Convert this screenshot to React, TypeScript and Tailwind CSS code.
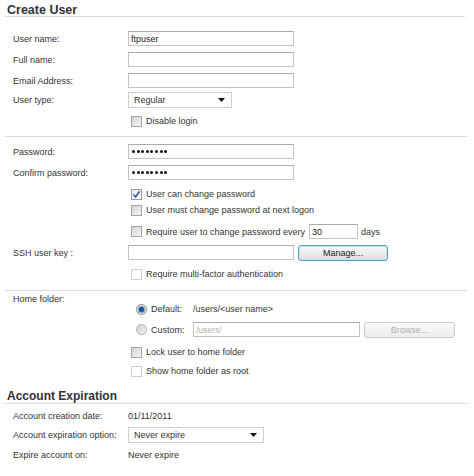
import React from "react";

const Checkbox = ({ checked = false, disabled = false }: { checked?: boolean; disabled?: boolean }) => (
  <span
    className={
      "relative flex h-[11px] w-[11px] shrink-0 items-center justify-center border " +
      (disabled
        ? "border-[#d0d0d0] bg-white"
        : checked
        ? "border-[#9a9a9a] bg-gradient-to-br from-[#e8e8e8] to-white"
        : "border-[#a3a3a3] bg-gradient-to-br from-[#d4d4d4] to-[#f6f6f6]")
    }
  >
    {checked && (
      <svg width="9" height="9" viewBox="0 0 9 9" className="absolute">
        <path d="M1.5 4.5 L3.6 7 L7.6 1.2" fill="none" stroke="#2b5aa8" strokeWidth="1.6" />
      </svg>
    )}
  </span>
);

const Radio = ({ checked = false }: { checked?: boolean }) => (
  <span
    className={
      "flex h-[11px] w-[11px] shrink-0 items-center justify-center rounded-full border " +
      (checked ? "border-[#8a8a8a] bg-[#e6e6e6]" : "border-[#b0b0b0] bg-gradient-to-br from-[#d0d0d0] to-[#f4f4f4]")
    }
  >
    {checked && <span className="h-[5px] w-[5px] rounded-full bg-[#1f4f8f] ring-1 ring-[#6f9fd3]" />}
  </span>
);

const Input = ({ w, value, muted }: { w: string; value?: string; muted?: boolean }) => (
  <div
    className={
      "flex h-[15px] shrink-0 items-center border border-[#c3c3c3] border-t-[#aaaaaa] bg-white pl-[2px] " + w
    }
  >
    {value && <span className={muted ? "text-[#b0b0b0] text-[8.5px]" : "text-[#222]"}>{value}</span>}
  </div>
);

const Password = () => (
  <div className="flex h-[15px] w-[166px] shrink-0 items-center border border-[#c3c3c3] border-t-[#aaaaaa] bg-white pl-[3px]">
    <span className="flex gap-[1.6px]">
      {[0, 1, 2, 3, 4, 5, 6, 7].map((i) => (
        <span key={i} className="h-[3px] w-[3px] rounded-full bg-[#111]" />
      ))}
    </span>
  </div>
);

const Select = ({ w, value }: { w: string; value: string }) => (
  <div
    className={
      "flex h-[16px] shrink-0 items-center justify-between border border-[#cfcfcf] bg-white pl-[5px] pr-[6px] " + w
    }
  >
    <span className="text-[#333]">{value}</span>
    <svg width="7" height="4" viewBox="0 0 7 4">
      <path d="M0 0 H7 L3.5 4 Z" fill="#111" />
    </svg>
  </div>
);

const Row = ({ label, mt, h, children }: { label?: string; mt: string; h: string; children?: React.ReactNode }) => (
  <div className={"flex items-center " + mt + " " + h}>
    <div className="w-[128px] shrink-0 pl-[13px] text-[#333]">{label}</div>
    {children}
  </div>
);

const Check = ({ label, checked, disabled }: { label: string; checked?: boolean; disabled?: boolean }) => (
  <div className="ml-[3px] flex items-center gap-[4px]">
    <Checkbox checked={checked} disabled={disabled} />
    <span className="text-[#333]">{label}</span>
  </div>
);

const Separator = ({ mt }: { mt: string }) => (
  <div className={"ml-[5px] h-px w-[462px] bg-[#dddddd] " + mt} />
);

export default function App() {
  return (
    <div
      className="h-[476px] w-[474px] overflow-hidden bg-white text-[9px] leading-[12px] text-[#333]"
      style={{ fontFamily: '"Liberation Sans", Arial, sans-serif' }}
    >
      <div className="ml-[5px] mt-[4px] h-[14px] w-[460px] border-b border-[#dcdcdc] pl-[2px]">
        <div className="-mt-[1px] text-[12.5px] font-bold leading-[14px] text-[#333]">Create User</div>
      </div>

      <Row label="User name:" mt="mt-[14px]" h="h-[15px]">
        <Input w="w-[166px]" value="ftpuser" />
      </Row>
      <Row label="Full name:" mt="mt-[6px]" h="h-[15px]">
        <Input w="w-[166px]" />
      </Row>
      <Row label="Email Address:" mt="mt-[6px]" h="h-[15px]">
        <Input w="w-[166px]" />
      </Row>
      <Row label="User type:" mt="mt-[4px]" h="h-[16px]">
        <Select w="w-[104px]" value="Regular" />
      </Row>
      <Row mt="mt-[7px]" h="h-[12px]">
        <Check label="Disable login" />
      </Row>
      <Separator mt="mt-[9px]" />

      <Row label="Password:" mt="mt-[7px]" h="h-[15px]">
        <Password />
      </Row>
      <Row label="Confirm password:" mt="mt-[6px]" h="h-[15px]">
        <Password />
      </Row>
      <Row mt="mt-[8px]" h="h-[12px]">
        <Check label="User can change password" checked />
      </Row>
      <Row mt="mt-[4px]" h="h-[12px]">
        <Check label="User must change password at next logon" />
      </Row>
      <Row mt="mt-[8px]" h="h-[15px]">
        <Check label="Require user to change password every" />
        <div className="ml-[4px]">
          <Input w="w-[49px]" value="30" />
        </div>
        <span className="ml-[3px]">days</span>
      </Row>
      <Row label="SSH user key :" mt="mt-[6px]" h="h-[15px]">
        <Input w="w-[166px]" />
        <button className="ml-[4px] h-[16px] w-[90px] rounded-[3px] border border-[#4fa3cf] bg-gradient-to-b from-[#fafafa] to-[#dedede] text-[9px] leading-[12px] text-[#222] shadow-[inset_0_0_0_1px_#bfe3f5]">
          Manage...
        </button>
      </Row>
      <Row mt="mt-[8px]" h="h-[12px]">
        <Check label="Require multi-factor authentication" disabled />
      </Row>
      <Separator mt="mt-[10px]" />

      <div className="flex">
        <div className="mt-[2px] w-[128px] shrink-0 pl-[13px]">Home folder:</div>
        <div className="flex flex-col">
          <div className="ml-[8px] mt-[12px] flex h-[12px] items-center">
            <Radio checked />
            <span className="ml-[4px] w-[42px]">Default:</span>
            <span>/users/&lt;user name&gt;</span>
          </div>
          <div className="ml-[8px] mt-[7px] flex h-[15px] items-center">
            <Radio />
            <span className="ml-[4px] w-[42px]">Custom:</span>
            <Input w="w-[167px]" value="/users/" muted />
            <button className="ml-[4px] h-[16px] w-[91px] rounded-[3px] border border-[#cccccc] bg-gradient-to-b from-[#fafafa] to-[#ececec] text-[9px] leading-[12px] text-[#b0b0b0]">
              Browse...
            </button>
          </div>
          <div className="mt-[9px] flex h-[12px] items-center">
            <Check label="Lock user to home folder" />
          </div>
          <div className="mt-[7px] flex h-[12px] items-center">
            <Check label="Show home folder as root" disabled />
          </div>
        </div>
      </div>

      <div className="ml-[5px] mt-[11px] flex h-[16px] w-[462px] items-center border-b border-[#dcdcdc] pl-[2px]">
        <div className="text-[12px] font-bold leading-[14px] text-[#333]">Account Expiration</div>
      </div>
      <Row label="Account creation date:" mt="mt-[6px]" h="h-[12px]">
        <span>01/11/2011</span>
      </Row>
      <Row label="Account expiration option:" mt="mt-[5px]" h="h-[16px]">
        <Select w="w-[136px]" value="Never expire" />
      </Row>
      <Row label="Expire account on:" mt="mt-[6px]" h="h-[12px]">
        <span>Never expire</span>
      </Row>
    </div>
  );
}
